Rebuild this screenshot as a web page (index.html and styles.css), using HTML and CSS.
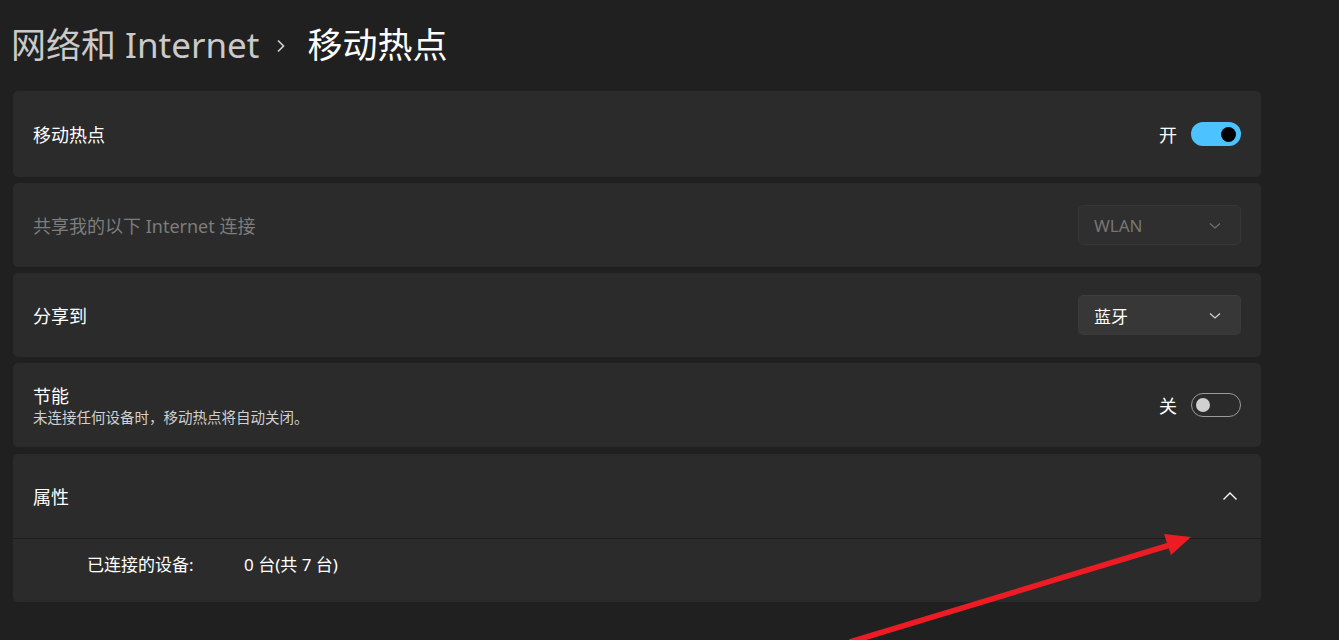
FILE: index.html
```html
<!DOCTYPE html>
<html lang="zh-CN">
<head>
  <meta charset="UTF-8">
  <meta name="viewport" content="width=device-width, initial-scale=1.0">
  <title>移动热点</title>
  <link rel="stylesheet" href="styles.css">
</head>
<body>
  <div class="page">
    <div class="page-header">
      <span class="crumb">网络和 Internet</span>
      <svg class="crumb-sep" width="10" height="14" viewBox="0 0 10 14"><path d="M2 1.5 L7.5 7 L2 12.5" fill="none" stroke="#cfcfcf" stroke-width="1.7"/></svg>
      <span class="crumb current">移动热点</span>
    </div>

    <div class="card tall">
      <span class="label">移动热点</span>
      <div class="control">
        <span class="state">开</span>
        <span class="toggle on"><span class="knob"></span></span>
      </div>
    </div>

    <div class="card">
      <span class="label disabled">共享我的以下 Internet 连接</span>
      <div class="dropdown disabled">
        <span>WLAN</span>
        <svg width="12" height="8" viewBox="0 0 12 8"><path d="M1 1.5 L6 6 L11 1.5" fill="none" stroke="#6f6f6f" stroke-width="1.3"/></svg>
      </div>
    </div>

    <div class="card">
      <span class="label">分享到</span>
      <div class="dropdown">
        <span>蓝牙</span>
        <svg width="12" height="8" viewBox="0 0 12 8"><path d="M1 1.5 L6 6 L11 1.5" fill="none" stroke="#cfcfcf" stroke-width="1.3"/></svg>
      </div>
    </div>

    <div class="card">
      <div class="label-group">
        <span class="label">节能</span>
        <span class="desc">未连接任何设备时，移动热点将自动关闭。</span>
      </div>
      <div class="control">
        <span class="state">关</span>
        <span class="toggle off"><span class="knob"></span></span>
      </div>
    </div>

    <div class="expander">
      <div class="expander-head">
        <span class="label">属性</span>
        <svg width="16" height="10" viewBox="0 0 16 10"><path d="M1.5 8.5 L8 2 L14.5 8.5" fill="none" stroke="#ffffff" stroke-width="1.4"/></svg>
      </div>
      <div class="expander-body">
        <span>已连接的设备:</span>
        <span>0 台(共 7 台)</span>
      </div>
    </div>
  </div>

  <!-- annotation arrow drawn over the screenshot -->
  <svg class="annotation" width="1339" height="640" viewBox="0 0 1339 640">
    <line x1="850" y1="642" x2="1170" y2="545" stroke="#ed1c24" stroke-width="5.5"/>
    <polygon points="1191,537 1164,534 1171,555" fill="#ed1c24"/>
  </svg>
</body>
</html>
```

FILE: styles.css
```css
body {
  margin: 0;
  background: #202020;
  color: #ffffff;
  font-family: "Noto Sans", "Noto Sans CJK SC", sans-serif;
  height: 640px;
  overflow: hidden;
}
.page {
  width: 1248px;
  padding-left: 13px;
}
.page-header {
  height: 91px;
  display: flex;
  align-items: center;
  margin-left: -2px;
}
.crumb {
  font-size: 35px;
  line-height: 1.2;
  color: #cacaca;
  margin-top: -2px;
}
.crumb.current {
  color: #ffffff;
}
.crumb-sep {
  margin: 0 21px 0 17px;
}
.card {
  background: #2b2b2b;
  border-radius: 5px;
  height: 84px;
  padding: 0 20px;
  margin-bottom: 6px;
  display: flex;
  align-items: center;
  justify-content: space-between;
  box-sizing: border-box;
}
.card.tall {
  height: 86px;
}
.label {
  font-size: 18px;
  line-height: 24px;
  padding-top: 2px;
}
.label.disabled {
  color: #7d7d7d;
}
.label-group {
  display: flex;
  flex-direction: column;
}
.label-group .label {
  padding-top: 0;
}
.desc {
  font-size: 14.5px;
  line-height: 18px;
  color: #d0d0d0;
}
.control {
  display: flex;
  align-items: center;
}
.state {
  font-size: 18px;
  margin-right: 14px;
}
.toggle {
  width: 50px;
  height: 24px;
  border-radius: 12px;
  box-sizing: border-box;
  display: flex;
  align-items: center;
}
.toggle.on {
  background: #4cc2ff;
  justify-content: flex-end;
  padding-right: 5px;
}
.toggle.on .knob {
  width: 15px;
  height: 15px;
  border-radius: 50%;
  background: #000000;
}
.toggle.off {
  border: 1px solid #9b9b9b;
  padding-left: 4px;
}
.toggle.off .knob {
  width: 14px;
  height: 14px;
  border-radius: 50%;
  background: #d0d0d0;
}
.dropdown {
  width: 163px;
  height: 40px;
  box-sizing: border-box;
  border-radius: 5px;
  background: #373737;
  border: 1px solid #3a3a3a;
  border-top-color: #3e3e3e;
  display: flex;
  align-items: center;
  justify-content: space-between;
  padding: 1px 19px 0 15px;
  font-size: 17px;
}
.dropdown.disabled {
  background: #2f2f2f;
  border-color: #363636;
  color: #767676;
}
.expander {
  background: #2b2b2b;
  border-radius: 5px;
  margin-top: 7px;
}
.expander-head {
  height: 84px;
  padding: 0 23px 0 20px;
  display: flex;
  align-items: center;
  justify-content: space-between;
  border-bottom: 1px solid #1c1c1c;
}
.expander-body {
  height: 63px;
  box-sizing: border-box;
  display: grid;
  grid-template-columns: 157px auto;
  align-items: start;
  padding: 14px 0 0 74px;
  font-size: 17px;
  line-height: 24px;
}
.annotation {
  position: absolute;
  left: 0;
  top: 0;
  pointer-events: none;
}
```
